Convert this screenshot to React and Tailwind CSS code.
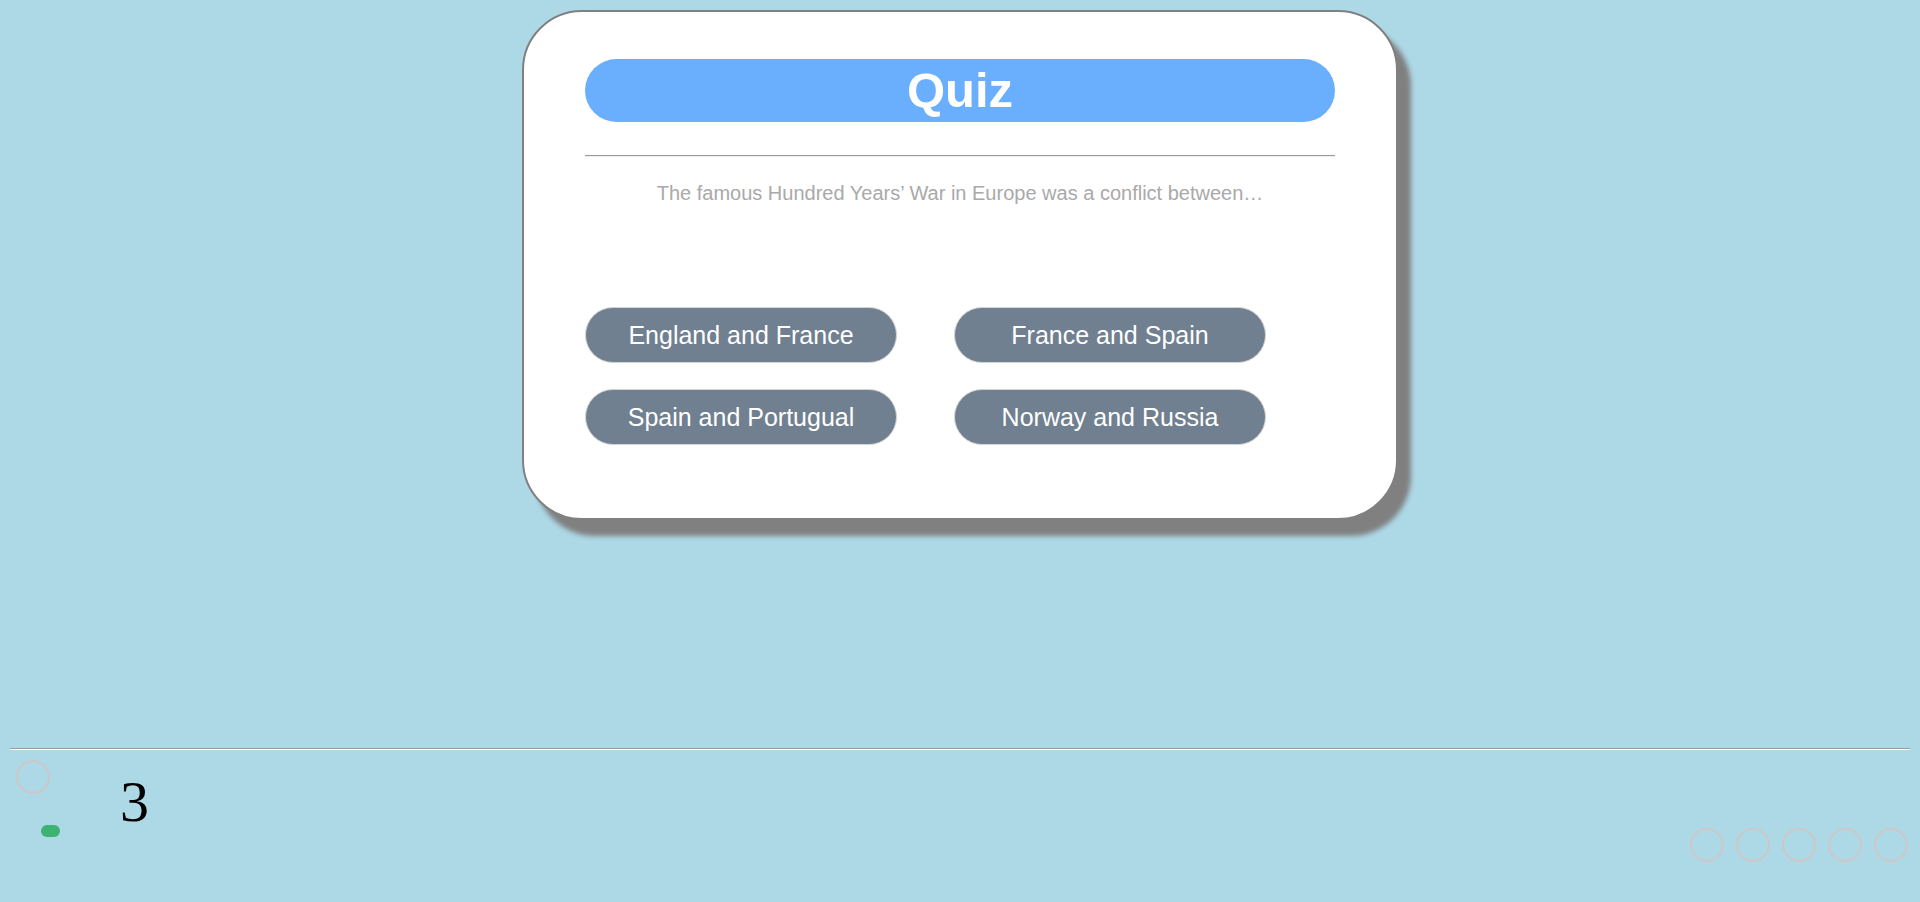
const answers = [
  "England and France",
  "France and Spain",
  "Spain and Portugual",
  "Norway and Russia",
];

const Dot = () => (
  <div className="w-[34px] h-[34px] shrink-0 rounded-full border-2 border-[#cdc8c8]"></div>
);

const App = () => {
  return (
    <div className="min-h-screen w-full bg-[#add8e6] flex flex-col font-['Liberation_Sans',Arial,sans-serif]">
      <div className="mx-auto mt-[10px] w-[876px] h-[510px] bg-white border-2 border-[#808080] rounded-[60px] shadow-[13px_16px_5px_#808080] flex flex-col items-center pt-[47px]">
        <h1 className="w-[750px] h-[63px] rounded-full bg-[#6aaffe] text-white text-[49px] font-bold flex items-center justify-center leading-none">
          Quiz
        </h1>

        <div className="w-[750px] mt-[33px] border-t border-t-[#9a9a9a] border-b border-b-[#eeeeee]"></div>

        <p className="mt-[25px] text-[20px] leading-[23px] text-[#a9a9a9] text-center w-[750px]">
          The famous Hundred Years’ War in Europe was a conflict between…
        </p>

        <div className="w-[750px] mt-[102px] grid grid-cols-[312px_312px] gap-x-[57px] gap-y-[26px]">
          {answers.map((a) => (
            <button
              key={a}
              className="h-[56px] rounded-full bg-[#708090] border border-[#d4d4d4] text-white text-[25px] leading-none flex items-center justify-center"
            >
              {a}
            </button>
          ))}
        </div>
      </div>

      <div className="mt-[228px] mx-[10px] border-t border-t-[#9a9a9a] border-b border-b-white"></div>

      <div className="flex items-start pl-[16px] pr-[12px]">
        <div className="flex flex-col w-[44px]">
          <div className="mt-[10px]">
            <Dot />
          </div>
          <div className="ml-[25px] mt-[31px] w-[19px] h-[12px] rounded-full bg-[#3cb371]"></div>
        </div>

        <span className="ml-[60px] mt-[23px] text-[58px] leading-none text-black font-['Liberation_Serif','Times_New_Roman',serif]">
          3
        </span>

        <div className="ml-auto mt-[78px] flex gap-[12px]">
          <Dot />
          <Dot />
          <Dot />
          <Dot />
          <Dot />
        </div>
      </div>
    </div>
  );
};

export default App;
